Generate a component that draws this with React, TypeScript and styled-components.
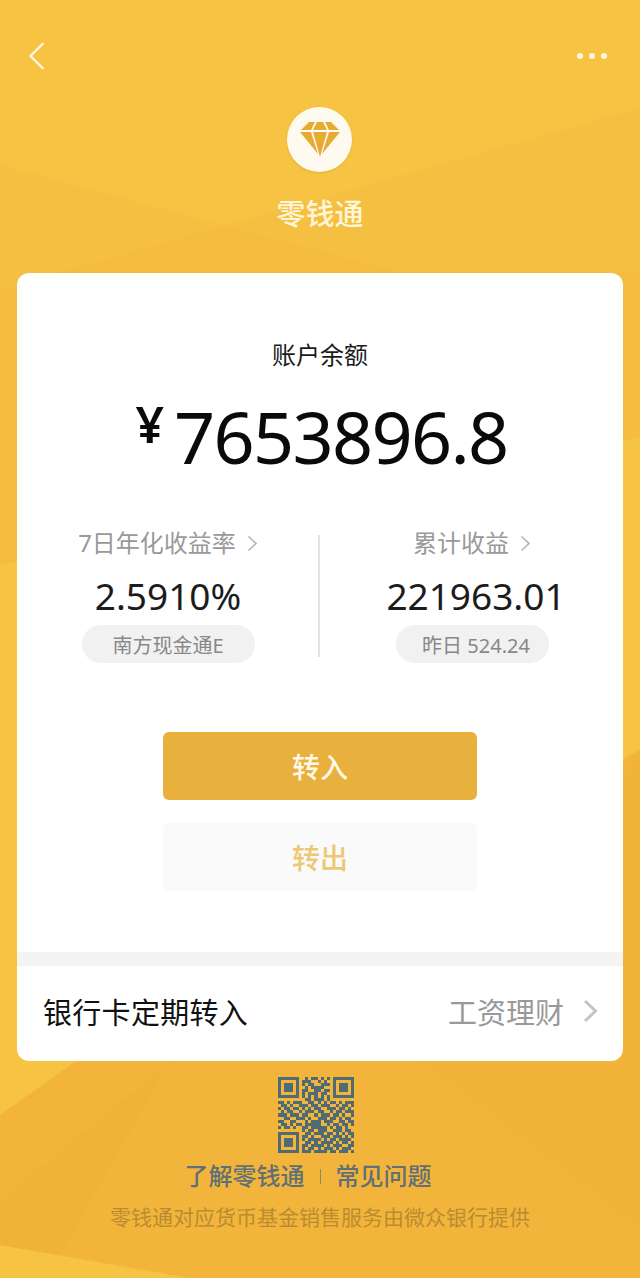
import React from "react";
import styled, { createGlobalStyle } from "styled-components";

const GlobalStyle = createGlobalStyle`
  html, body {
    margin: 0;
    padding: 0;
    background: #f6c343;
  }
  * {
    box-sizing: border-box;
  }
`;

const QR_ROWS = [
  "1111111001011010101111111",
  "1000001011100101001000001",
  "1011101010110011101011101",
  "1011101001011110001011101",
  "1011101011001101101011101",
  "1000001010111011001000001",
  "1111111010101010101111111",
  "0000000001101110100000000",
  "1101011100110101011010111",
  "0110100111011011100101101",
  "1011011010101100111011010",
  "0101100101110110010110111",
  "1110111011001011101101001",
  "0011001110100111011010110",
  "1100110001011101110011011",
  "0110101101111100101101101",
  "1011010011011111010110100",
  "0000000010110111001110110",
  "1111111001101110110101011",
  "1000001011010011101110101",
  "1011101010111101011011110",
  "1011101001101011110101101",
  "1011101011011110101110011",
  "1000001010110101110101110",
  "1111111011101111011011101",
];

export default function App() {
  return (
    <Page>
      <GlobalStyle />
      <Backdrop viewBox="0 0 640 1278" preserveAspectRatio="none">
        <polygon points="0,165 400,272 640,272 640,437 0,565" fill="#ee9f2c" fillOpacity="0.06" />
        <polygon points="640,108 60,272 0,290 0,565 640,437" fill="#ee9f2c" fillOpacity="0.06" />
        <polygon points="640,750 75,1062 0,1115 0,1245 190,1278 640,1278" fill="#ec9c2e" fillOpacity="0.38" />
        <polygon points="170,1062 0,1200 0,1245 60,1256" fill="#ec9c2e" fillOpacity="0.05" />
        <polygon points="420,1062 640,1232 640,750" fill="#ec9c2e" fillOpacity="0.03" />
      </Backdrop>

      <TopBar>
        <svg width="16" height="28" viewBox="0 0 16 28" fill="none">
          <path d="M14.5 1 L1.5 14 L14.5 27" stroke="#fff6df" strokeWidth="2.4" />
        </svg>
        <MoreDots>
          <Dot />
          <Dot />
          <Dot />
        </MoreDots>
      </TopBar>

      <LogoCircle>
        <svg width="40" height="38" viewBox="0 0 40 38">
          <g fill="#e6ab35">
            <polygon points="9,0 15,0 11,8 1,8" />
            <polygon points="17,0 23,0 27,8 13,8" />
            <polygon points="25,0 31,0 39,8 29,8" />
            <polygon points="0,10 11,10 18,32" />
            <polygon points="13,10 27,10 20,35" />
            <polygon points="29,10 40,10 22,32" />
          </g>
        </svg>
      </LogoCircle>
      <ProductName>零钱通</ProductName>

      <Card>
        <BalanceTitle>账户余额</BalanceTitle>
        <BalanceAmount>
          <Currency>¥</Currency>7653896.8
        </BalanceAmount>

        <Stats>
          <StatColumn>
            <StatLabel>
              7日年化收益率
              <Chevron width="11" height="17" viewBox="0 0 11 17" fill="none">
                <path d="M1.5 1.5 L9 8.5 L1.5 15.5" stroke="#b4b4b4" strokeWidth="1.6" />
              </Chevron>
            </StatLabel>
            <StatValue>2.5910%</StatValue>
            <StatPill $width={173}>南方现金通E</StatPill>
          </StatColumn>
          <StatDivider />
          <StatColumn>
            <StatLabel>
              累计收益
              <Chevron width="11" height="17" viewBox="0 0 11 17" fill="none">
                <path d="M1.5 1.5 L9 8.5 L1.5 15.5" stroke="#b4b4b4" strokeWidth="1.6" />
              </Chevron>
            </StatLabel>
            <StatValue $shift={8}>221963.01</StatValue>
            <StatPill $width={153} $inset={8}>
              昨日 524.24
            </StatPill>
          </StatColumn>
        </Stats>

        <Actions>
          <ActionButton $primary>转入</ActionButton>
          <ActionButton>转出</ActionButton>
        </Actions>

        <SectionGap />

        <PlanRow>
          <PlanTitle>银行卡定期转入</PlanTitle>
          <PlanAside>
            工资理财
            <svg width="15" height="24" viewBox="0 0 15 24" fill="none">
              <path d="M2 2 L12.5 12 L2 22" stroke="#c4c4c4" strokeWidth="3" />
            </svg>
          </PlanAside>
        </PlanRow>
      </Card>

      <Footer>
        <QrCode width="76" height="76" viewBox="0 0 25 25" shapeRendering="crispEdges">
          {QR_ROWS.map((row, y) =>
            row.split("").map((cell, x) =>
              cell === "1" ? <rect key={`${x}-${y}`} x={x} y={y} width="1" height="1" fill="#4f6b73" /> : null
            )
          )}
        </QrCode>
        <FooterLinks>
          <span>了解零钱通</span>
          <LinkDivider />
          <span>常见问题</span>
        </FooterLinks>
        <FooterNote>零钱通对应货币基金销售服务由微众银行提供</FooterNote>
      </Footer>
    </Page>
  );
}

const FONT = `"Noto Sans", "Noto Sans CJK SC", sans-serif`;

const Page = styled.div`
  position: relative;
  width: 640px;
  height: 1278px;
  overflow: hidden;
  display: flex;
  flex-direction: column;
  align-items: center;
  background: #f6c343;
  font-family: ${FONT};
`;

const Backdrop = styled.svg`
  position: absolute;
  inset: 0;
  width: 640px;
  height: 1278px;
`;

const TopBar = styled.div`
  position: relative;
  width: 100%;
  height: 70px;
  padding: 42px 33px 0 29px;
  display: flex;
  justify-content: space-between;
  align-items: flex-start;
`;

const MoreDots = styled.div`
  display: flex;
  gap: 6px;
  margin-top: 11px;
`;

const Dot = styled.span`
  width: 6px;
  height: 6px;
  border-radius: 50%;
  background: #fff6df;
`;

const LogoCircle = styled.div`
  position: relative;
  width: 65px;
  height: 65px;
  margin: 37px 1px 0 0;
  border-radius: 50%;
  background: #fffaf0;
  box-shadow: 0 1px 2px rgba(200, 140, 30, 0.35);
  display: flex;
  align-items: center;
  justify-content: center;
  padding-top: 3px;
`;

const ProductName = styled.div`
  position: relative;
  margin-top: 22px;
  font-size: 29px;
  line-height: 40px;
  font-weight: 500;
  color: #fff5d8;
`;

const Card = styled.div`
  position: relative;
  width: 606px;
  height: 788px;
  margin-top: 39px;
  padding-top: 66px;
  border-radius: 12px;
  overflow: hidden;
  background: #fff;
  display: flex;
  flex-direction: column;
  align-items: center;
`;

const BalanceTitle = styled.div`
  font-size: 24px;
  line-height: 32px;
  color: #1a1a1a;
`;

const BalanceAmount = styled.div`
  margin: 25px 0 0 3px;
  height: 80px;
  display: flex;
  align-items: center;
  font-size: 72px;
  line-height: 80px;
  letter-spacing: -1.7px;
  color: #0a0a0a;
`;

const Currency = styled.span`
  align-self: flex-start;
  margin-right: 10px;
  font-size: 50px;
  line-height: 56px;
  letter-spacing: 0;
  font-weight: 600;
`;

const Stats = styled.div`
  width: 100%;
  margin-top: 51px;
  display: grid;
  grid-template-columns: 302px 2px 302px;
`;

const StatColumn = styled.div`
  display: flex;
  flex-direction: column;
  align-items: center;
`;

const StatLabel = styled.div`
  display: flex;
  align-items: center;
  gap: 11px;
  font-size: 24px;
  line-height: 32px;
  color: #999;
`;

const Chevron = styled.svg`
  flex: none;
`;

const StatValue = styled.div<{ $shift?: number }>`
  margin-top: 15px;
  margin-left: ${(p) => p.$shift ?? 0}px;
  font-size: 37px;
  line-height: 44px;
  color: #1c1c1c;
`;

const StatPill = styled.div<{ $width: number; $inset?: number }>`
  width: ${(p) => p.$width}px;
  height: 38px;
  margin-top: 7px;
  padding-left: ${(p) => p.$inset ?? 0}px;
  border-radius: 19px;
  background: #f1f1f1;
  display: flex;
  align-items: center;
  justify-content: center;
  font-size: 20px;
  color: #888;
`;

const StatDivider = styled.div`
  width: 2px;
  height: 122px;
  margin: 8px 0 0 -1px;
  background: #e2e2e2;
`;

const Actions = styled.div`
  margin-top: 69px;
  display: flex;
  flex-direction: column;
  gap: 23px;
`;

const ActionButton = styled.div<{ $primary?: boolean }>`
  width: 314px;
  height: 68px;
  border-radius: 6px;
  display: flex;
  align-items: center;
  justify-content: center;
  font-size: 28px;
  font-weight: 500;
  background: ${(p) => (p.$primary ? "#e8b03c" : "#fafafa")};
  color: ${(p) => (p.$primary ? "#fff8e6" : "#ecc873")};
`;

const SectionGap = styled.div`
  width: 100%;
  height: 14px;
  margin-top: 61px;
  background: #f4f4f5;
`;

const PlanRow = styled.div`
  width: 100%;
  height: 95px;
  padding: 0 25px 5px 26px;
  display: flex;
  align-items: center;
  justify-content: space-between;
`;

const PlanTitle = styled.div`
  font-size: 29px;
  letter-spacing: 0.3px;
  color: #111;
`;

const PlanAside = styled.div`
  display: flex;
  align-items: center;
  gap: 19px;
  font-size: 29px;
  color: #999;
`;

const Footer = styled.div`
  position: relative;
  margin-top: 16px;
  display: flex;
  flex-direction: column;
  align-items: center;
`;

const QrCode = styled.svg`
  margin-right: 8px;
`;

const FooterLinks = styled.div`
  margin: 7px 24px 0 0;
  display: flex;
  align-items: center;
  gap: 15px;
  font-size: 24px;
  line-height: 32px;
  font-weight: 500;
  color: #5f7078;
`;

const LinkDivider = styled.span`
  width: 1px;
  height: 15px;
  background: #8f8a66;
`;

const FooterNote = styled.div`
  margin-top: 11px;
  font-size: 21px;
  line-height: 28px;
  color: #b98c31;
`;
